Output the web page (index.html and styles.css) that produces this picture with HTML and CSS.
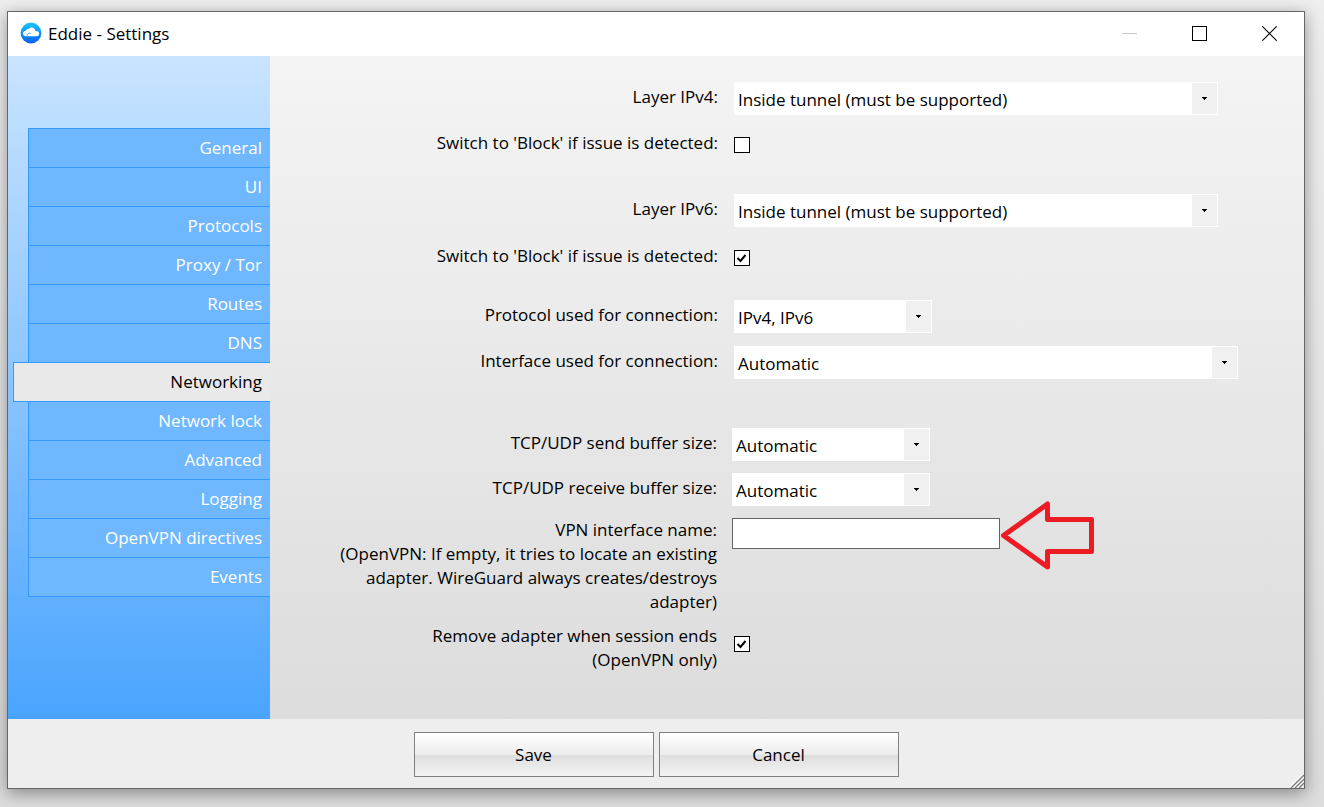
FILE: index.html
```html
<!DOCTYPE html>
<html lang="en">
<head>
<meta charset="utf-8">
<title>Eddie - Settings</title>
<link rel="stylesheet" href="styles.css">
</head>
<body>
<main class="window">
  <header class="titlebar">
    <svg class="logo" viewBox="0 0 22 22" aria-hidden="true">
      <defs><linearGradient id="sky" x1="0" y1="0" x2="0" y2="1"><stop offset="0" stop-color="#1cc6fb"/><stop offset="0.5" stop-color="#0a94fa"/><stop offset="1" stop-color="#0e5cf0"/></linearGradient></defs>
      <circle cx="11" cy="11" r="10.4" fill="url(#sky)"/>
      <path d="M5.600 14.200C3.400 14 2.400 12.300 3 10.600 3.400 9.500 4.400 8.800 5.600 8.900 6.200 7.400 7.400 6.800 8.600 7.100 9.600 5.600 11.300 5.100 12.900 5.700 14.400 6.200 15.300 7.400 15.500 8.900 17.700 8.700 19.300 10 19.200 11.700 19.100 13.300 17.900 14.300 16.200 14.300Z" fill="#fff"/>
      <path d="M7 14.300C6.800 12 8.300 10.600 10.800 11.300" fill="none" stroke="#1494f8" stroke-width="0.8"/>
    </svg>
    <h1 class="title">Eddie - Settings</h1>
    <button class="caption" type="button" aria-label="Minimize" disabled><svg viewBox="0 0 15 15" shape-rendering="crispEdges"><path d="M0 7.500H15" stroke="#c8c8c8"/></svg></button>
    <button class="caption" type="button" aria-label="Maximize"><svg viewBox="0 0 15 15" shape-rendering="crispEdges"><rect x="0.500" y="0.500" width="14" height="14" fill="none" stroke="#000"/></svg></button>
    <button class="caption" type="button" aria-label="Close"><svg viewBox="0 0 15 15"><path d="M0.300 0.300L14.700 14.700M14.700 0.300L0.300 14.700" stroke="#000" stroke-width="1.100"/></svg></button>
  </header>

  <div class="content">
    <nav class="sidebar" aria-label="Sections">
      <a class="tab" href="#general">General</a>
      <a class="tab" href="#ui">UI</a>
      <a class="tab" href="#protocols">Protocols</a>
      <a class="tab" href="#proxy">Proxy / Tor</a>
      <a class="tab" href="#routes">Routes</a>
      <a class="tab" href="#dns">DNS</a>
      <a class="tab tab-active" href="#networking" aria-current="page">Networking</a>
      <a class="tab" href="#lock">Network lock</a>
      <a class="tab" href="#advanced">Advanced</a>
      <a class="tab" href="#logging">Logging</a>
      <a class="tab" href="#directives">OpenVPN directives</a>
      <a class="tab" href="#events">Events</a>
    </nav>

    <form class="panel" id="settings">
      <div class="group">
        <div class="row row-select">
          <label for="layer4">Layer IPv4:</label>
          <span class="combo combo-wide"><select id="layer4"><option>Inside tunnel (must be supported)</option></select><svg class="drop" viewBox="0 0 5 3" shape-rendering="crispEdges"><path d="M0 0H5V1H4V2H3V3H2V2H1V1H0Z"/></svg></span>
        </div>
        <div class="row row-check">
          <label for="block4">Switch to 'Block' if issue is detected:</label>
          <span class="check"><input type="checkbox" id="block4"><svg class="tick" viewBox="0 0 16 16"><path d="M3.500 8L6.500 11L11.500 5" /></svg></span>
        </div>
      </div>
      <div class="group group-ipv6">
        <div class="row row-select">
          <label for="layer6">Layer IPv6:</label>
          <span class="combo combo-wide"><select id="layer6"><option>Inside tunnel (must be supported)</option></select><svg class="drop" viewBox="0 0 5 3" shape-rendering="crispEdges"><path d="M0 0H5V1H4V2H3V3H2V2H1V1H0Z"/></svg></span>
        </div>
        <div class="row row-check">
          <label for="block6">Switch to 'Block' if issue is detected:</label>
          <span class="check"><input type="checkbox" id="block6" checked><svg class="tick" viewBox="0 0 16 16"><path d="M3.500 8L6.500 11L11.500 5" /></svg></span>
        </div>
      </div>
      <div class="group group-connection">
        <div class="row row-select">
          <label for="protocol">Protocol used for connection:</label>
          <span class="combo combo-small"><select id="protocol"><option>IPv4, IPv6</option></select><svg class="drop" viewBox="0 0 5 3" shape-rendering="crispEdges"><path d="M0 0H5V1H4V2H3V3H2V2H1V1H0Z"/></svg></span>
        </div>
        <div class="row row-select">
          <label for="iface">Interface used for connection:</label>
          <span class="combo combo-full"><select id="iface"><option>Automatic</option></select><svg class="drop" viewBox="0 0 5 3" shape-rendering="crispEdges"><path d="M0 0H5V1H4V2H3V3H2V2H1V1H0Z"/></svg></span>
        </div>
      </div>
      <div class="group group-adapter">
        <div class="row row-select">
          <label for="sendbuf">TCP/UDP send buffer size:</label>
          <span class="combo combo-small"><select id="sendbuf"><option>Automatic</option></select><svg class="drop" viewBox="0 0 5 3" shape-rendering="crispEdges"><path d="M0 0H5V1H4V2H3V3H2V2H1V1H0Z"/></svg></span>
        </div>
        <div class="row row-select">
          <label for="recvbuf">TCP/UDP receive buffer size:</label>
          <span class="combo combo-small"><select id="recvbuf"><option>Automatic</option></select><svg class="drop" viewBox="0 0 5 3" shape-rendering="crispEdges"><path d="M0 0H5V1H4V2H3V3H2V2H1V1H0Z"/></svg></span>
        </div>
        <div class="row">
          <label for="ifname">VPN interface name:<br>(OpenVPN: If empty, it tries to locate an existing<br>adapter. WireGuard always creates/destroys<br>adapter)</label>
          <span class="field"><input class="textbox" type="text" id="ifname"><svg class="pointer" viewBox="0 0 96 72" aria-hidden="true"><path d="M3.500 35.500L47.500 4V19.500H91.500V51.500H47.500V67Z"/></svg></span>
        </div>
      </div>
      <div class="group group-adapter">
        <div class="row row-tall">
          <label for="remove">Remove adapter when session ends<br>(OpenVPN only)</label>
          <span class="check"><input type="checkbox" id="remove" checked><svg class="tick" viewBox="0 0 16 16"><path d="M3.500 8L6.500 11L11.500 5" /></svg></span>
        </div>
      </div>
    </form>
  </div>

  <footer class="actions">
    <button class="action" type="submit" form="settings">Save</button>
    <button class="action" type="button">Cancel</button>
    <svg class="grip" viewBox="0 0 14 14" aria-hidden="true"><path d="M0 13.500L13.500 0M4 13.500L13.500 4M8 13.500L13.500 8" stroke="#fff" stroke-width="2"/><path d="M1 14L14 1M5 14L14 5M9 14L14 9" stroke="#777" stroke-width="1.300"/></svg>
  </footer>
</main>
</body>
</html>
```
FILE: styles.css
```css
* { box-sizing: border-box; }

body {
  display: flex;
  min-height: 100vh;
  margin: 0;
  padding: 11px 19px 18px 7px;
  background: linear-gradient(#eeeeee, #dddddd);
  color: #000;
  font: 17px/24px "Open Sans", "Noto Sans", sans-serif;
}

button, input, select { font: inherit; color: inherit; }

.window {
  display: flex;
  flex: 1;
  flex-direction: column;
  border: 1px solid #666;
  background: #eee;
  box-shadow: 0 4px 16px rgba(0, 0, 0, 0.4);
}

.titlebar {
  display: flex;
  align-items: center;
  height: 44px;
  padding-left: 12px;
  background: #fff;
}

.logo { width: 22px; height: 22px; margin-bottom: 2px; }

.title {
  flex: 1;
  margin: 0 0 0 6px;
  font-size: 17px;
  font-weight: 400;
}

.caption {
  display: flex;
  align-items: center;
  justify-content: center;
  width: 70px;
  height: 44px;
  padding: 0 0 2px;
  border: 0;
  background: none;
}

.caption svg { width: 15px; height: 15px; }

.content { display: flex; flex: 1; }

.sidebar {
  display: flex;
  flex-direction: column;
  align-items: flex-end;
  width: 262px;
  padding-top: 72px;
  background: linear-gradient(#c9e4ff, #4aa4ff);
}

.tab {
  width: 242px;
  height: 39px;
  padding-right: 8px;
  border-top: 1px solid #3399ff;
  border-left: 1px solid #3399ff;
  background: #6fb7ff;
  color: #fff;
  line-height: 37px;
  text-align: right;
  text-decoration: none;
}

.tab:last-child { height: 40px; border-bottom: 1px solid #3399ff; }

.tab-active {
  width: 257px;
  height: 40px;
  border-bottom: 1px solid #3399ff;
  background: #e9e9e9;
  color: #000;
}

.tab-active + .tab { height: 38px; border-top: 0; }

.panel {
  flex: 1;
  padding: 26px 0 20px;
  background: linear-gradient(#f4f4f4, #dcdcdc);
}

.group { display: grid; gap: 16px; margin-bottom: 39px; }
.group.group-ipv6 { gap: 17px; margin-bottom: 32px; }
.group.group-connection { gap: 13px; margin-bottom: 49px; }
.group.group-adapter { gap: 12px; margin-bottom: 10px; }

.row {
  display: grid;
  grid-template-columns: 448px 1fr;
  column-gap: 16px;
  align-items: start;
  text-align: right;
}

.group-adapter .row { grid-template-columns: 447px 1fr; column-gap: 15px; }
.group-adapter .row-tall { column-gap: 17px; }
.row-select label { padding-top: 3px; }

.combo {
  display: block;
  position: relative;
  height: 33px;
}

.combo-wide { width: 484px; }
.combo-small { width: 198px; }
.combo-full { width: 504px; }

.combo select {
  width: 100%;
  height: 33px;
  padding: 2px 28px 0 3px;
  appearance: none;
  border: 1px solid #fff;
  border-radius: 0;
  background: linear-gradient(#f0f0f0, #f0f0f0) right / 25px 100% no-repeat #fff;
}

.drop {
  position: absolute;
  top: 15px;
  right: 11px;
  width: 5px;
  height: 3px;
  pointer-events: none;
}

.check {
  display: block;
  position: relative;
  width: 16px;
  height: 16px;
  margin-top: 6px;
}

.row-tall .check { margin-top: 12px; }

.check input {
  display: block;
  width: 16px;
  height: 16px;
  margin: 0;
  appearance: none;
  border: 1px solid #000;
  background: #fff;
}

.tick {
  display: none;
  position: absolute;
  inset: 0;
  fill: none;
  stroke: #000;
  stroke-width: 2;
  pointer-events: none;
}

.check input:checked + .tick { display: block; }

.field { display: block; position: relative; width: 268px; }

.textbox {
  display: block;
  width: 100%;
  height: 31px;
  padding: 0 4px;
  border: 1px solid #646464;
  background: #fff;
}

.pointer {
  position: absolute;
  top: -18px;
  left: 100%;
  width: 96px;
  height: 72px;
  fill: none;
  stroke: #ed1c24;
  stroke-width: 5;
  stroke-linejoin: round;
  pointer-events: none;
}

.actions {
  display: flex;
  position: relative;
  justify-content: center;
  gap: 5px;
  padding: 13px 0 11px;
}

.action {
  width: 240px;
  height: 45px;
  border: 1px solid #808080;
  background: linear-gradient(#fff, #ececec 50%, #dedede 51%, #f3f3f3);
}

.grip {
  position: absolute;
  right: 0;
  bottom: 0;
  width: 14px;
  height: 14px;
}
```
